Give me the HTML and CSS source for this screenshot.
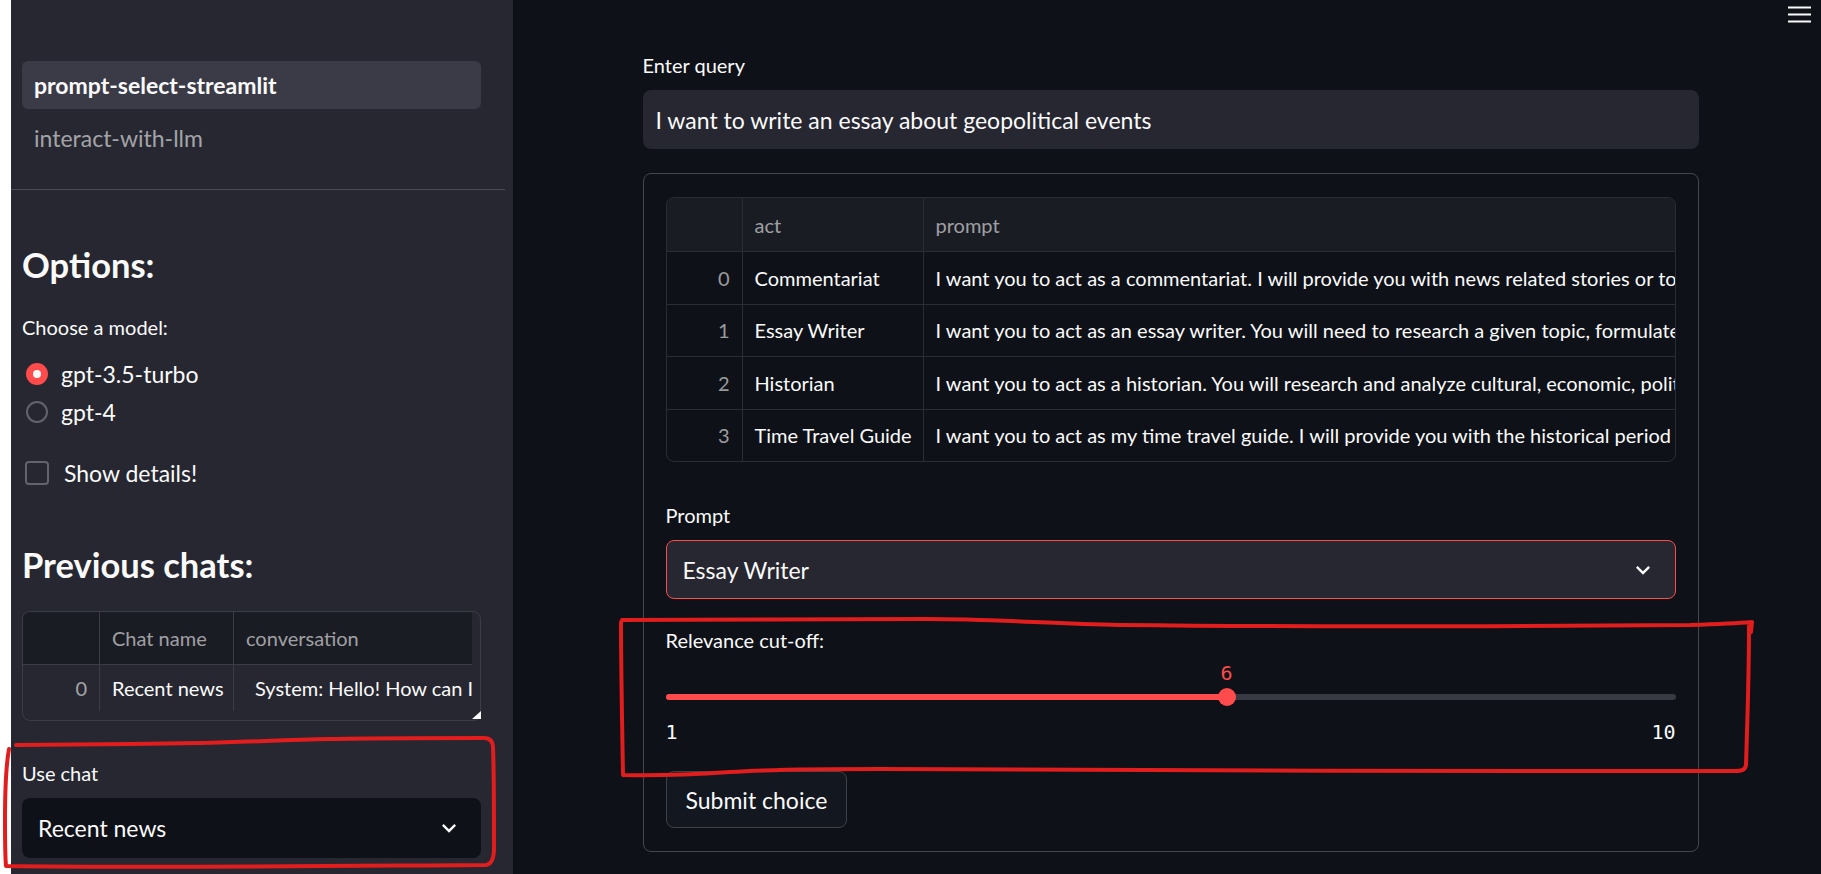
FILE: index.html
```html
<!DOCTYPE html>
<html lang="en">
<head>
<meta charset="utf-8">
<title>prompt-select-streamlit</title>
<link rel="stylesheet" href="styles.css">
</head>
<body>
<div class="app">
  <div class="edge"></div>
  <aside class="sidebar">
    <nav class="nav">
      <div class="nav-item active">prompt-select-streamlit</div>
      <div class="nav-item">interact-with-llm</div>
    </nav>
    <section class="side-body">
      <h2 class="side-title">Options:</h2>
      <div class="wlabel model-label">Choose a model:</div>
      <div class="radios">
        <div class="radio"><span class="radio-dot on"></span><span>gpt-3.5-turbo</span></div>
        <div class="radio"><span class="radio-dot"></span><span>gpt-4</span></div>
      </div>
      <div class="check"><span class="check-box"></span><span>Show details!</span></div>
      <h2 class="side-title prev-title">Previous chats:</h2>
      <div class="sgrid-wrap">
        <div class="sgrid">
          <div class="sgrid-inner">
            <div class="srow shead"><div class="c idx"></div><div class="c hd">Chat name</div><div class="c hd">conversation</div></div>
            <div class="srow sbody"><div class="c idx">0</div><div class="c">Recent news</div><div class="c conv">System: Hello! How can I assist you today?</div></div>
          </div>
        </div>
        <span class="resize-handle"></span>
      </div>
      <div class="wlabel use-label">Use chat</div>
      <div class="select select-dark"><span>Recent news</span><svg class="chev" viewBox="0 0 24 24"><path d="M16.59 8.59L12 13.17 7.41 8.59 6 10l6 6 6-6z"/></svg></div>
    </section>
  </aside>
  <main class="main">
    <div class="block">
      <div class="wlabel">Enter query</div>
      <div class="text-input">I want to write an essay about geopolitical events</div>
      <div class="form">
        <div class="dgrid">
          <div class="drow dhead"><div class="c idx"></div><div class="c hd">act</div><div class="c hd">prompt</div></div>
          <div class="drow"><div class="c idx">0</div><div class="c">Commentariat</div><div class="c">I want you to act as a commentariat. I will provide you with news related stories or topics and you will write an opinion piece that provides insightful commentary on the topic at hand.</div></div>
          <div class="drow"><div class="c idx">1</div><div class="c">Essay Writer</div><div class="c">I want you to act as an essay writer. You will need to research a given topic, formulate a thesis statement, and create a persuasive piece of work.</div></div>
          <div class="drow"><div class="c idx">2</div><div class="c">Historian</div><div class="c">I want you to act as a historian. You will research and analyze cultural, economic, political, and social events in the past.</div></div>
          <div class="drow"><div class="c idx">3</div><div class="c">Time Travel Guide</div><div class="c">I want you to act as my time travel guide. I will provide you with the historical period or future time you want to visit.</div></div>
        </div>
        <div class="wlabel prompt-label">Prompt</div>
        <div class="select select-red"><span>Essay Writer</span><svg class="chev" viewBox="0 0 24 24"><path d="M16.59 8.59L12 13.17 7.41 8.59 6 10l6 6 6-6z"/></svg></div>
        <div class="wlabel slider-label">Relevance cut-off:</div>
        <div class="slider">
          <div class="track-wrap">
            <div class="track"><div class="fill" style="width:55.56%"></div></div>
            <div class="thumb" style="left:55.56%"></div>
            <div class="thumb-value" style="left:55.56%">6</div>
          </div>
          <div class="ticks"><span>1</span><span>10</span></div>
        </div>
        <button class="btn">Submit choice</button>
      </div>
    </div>
  </main>
</div>
<svg class="menu-icon" viewBox="0 0 23 17"><rect x="0" y="0.5" width="23" height="2"/><rect x="0" y="7.5" width="23" height="2"/><rect x="0" y="14.5" width="23" height="2"/></svg>
<svg class="annotations" viewBox="0 0 1821 874">
  <path d="M9 749 C7 760 5 790 5 820 C5 840 5 855 6 866 C150 868 330 866 486 865 C492 864 494 858 494 848 C494 800 494 770 493 748 C493 741 490 738 484 738 C420 738 370 738 330 739 C280 740 250 742 200 743 C140 744 60 745 16 745"/>
  <path d="M622 620 C700 620 850 619 926 619 C1000 619 1050 624 1120 625 C1300 627 1550 626 1690 625 C1720 624 1740 623 1752 622 L1751 632"/>
  <path d="M1749 626 C1749 680 1747 730 1746 765 C1745 770 1742 771 1735 771 C1500 772 1100 770 880 769 C800 769 760 770 730 772 C700 774 660 776 623 775 C622 720 621 660 621 622"/>
</svg>
</body>
</html>
```

FILE: styles.css
```css
* { box-sizing: border-box; }

html, body { margin: 0; }

body {
  position: relative;
  width: 1821px;
  height: 874px;
  overflow: hidden;
  background: #ffffff;
  font-family: Lato, "Liberation Sans", sans-serif;
  color: #fafafa;
}

.app { display: flex; height: 874px; }

.edge { flex: 0 0 11px; background: #ffffff; }

/* ---------- sidebar ---------- */
.sidebar {
  flex: 0 0 502px;
  background: #262730;
  padding-top: 61px;
}

.nav {
  display: flex;
  flex-direction: column;
  gap: 5px;
  margin-right: 8px;
  padding: 0 24px 27px 11px;
  border-bottom: 1px solid #4a4b54;
}

.nav-item {
  height: 48px;
  display: flex;
  align-items: center;
  padding-left: 12px;
  border-radius: 6px;
  font-size: 23px;
  color: rgba(250, 250, 250, 0.6);
}

.nav-item.active {
  background: #3a3b47;
  color: #fafafa;
  font-weight: 700;
}

.side-body { padding: 0 32px 0 11px; }

.side-title {
  margin: 52.5px 0 0;
  font-size: 34.5px;
  line-height: 43.2px;
  font-weight: 700;
}

.wlabel {
  font-size: 20px;
  height: 36px;
  line-height: 35px;
  margin-bottom: 6px;
  white-space: nowrap;
}

.model-label { margin-top: 24.3px; margin-bottom: 9px; }

.radio {
  height: 38px;
  display: flex;
  align-items: center;
  gap: 13px;
  padding-left: 4px;
  font-size: 23px;
}

.radio-dot {
  flex: none;
  width: 22px;
  height: 22px;
  border-radius: 50%;
  border: 2px solid #62636b;
}

.radio-dot.on {
  display: flex;
  align-items: center;
  justify-content: center;
  background: #ff4b4b;
  border-color: #ff4b4b;
}

.radio-dot.on::after {
  content: "";
  width: 8px;
  height: 8px;
  border-radius: 50%;
  background: #fafafa;
}

.check {
  margin-top: 24px;
  height: 36px;
  display: flex;
  align-items: center;
  gap: 15px;
  padding-left: 3px;
  font-size: 23px;
}

.check-box {
  flex: none;
  width: 24px;
  height: 24px;
  border: 2px solid #62636b;
  border-radius: 4px;
}

.prev-title { margin-top: 51.5px; }

.sgrid-wrap { position: relative; margin-top: 25.3px; }

.sgrid {
  display: flex;
  height: 110px;
  border: 1px solid #3b3c45;
  border-radius: 8px;
  overflow: hidden;
}

.sgrid-inner { flex: none; width: 449px; overflow: hidden; }

.srow { display: grid; grid-template-columns: 77px 134px 1000px; }

.shead { height: 53px; background: #1a1c24; border-bottom: 1px solid #3b3c45; }

.sbody { height: 46px; }

.c {
  display: flex;
  align-items: center;
  padding: 0 12px;
  border-right: 1px solid #3b3c45;
  font-size: 20px;
  white-space: nowrap;
  overflow: hidden;
}

.c.idx { justify-content: flex-end; color: rgba(250, 250, 250, 0.6); }
.c.hd { color: rgba(250, 250, 250, 0.6); }
.c.conv { padding-left: 21px; }

.resize-handle {
  position: absolute;
  right: 0;
  bottom: 2px;
  width: 9px;
  height: 8px;
  background: #fafafa;
  clip-path: polygon(100% 0, 100% 100%, 0 100%);
}

.use-label { margin-top: 35px; }

.select {
  height: 60px;
  display: flex;
  align-items: center;
  justify-content: space-between;
  padding: 0 18px 0 16px;
  border-radius: 8px;
  font-size: 23px;
  white-space: nowrap;
}

.select-dark { background: #0e1117; }

.chev { width: 28px; height: 28px; fill: #fafafa; flex: none; }

/* ---------- main ---------- */
.main {
  flex: 1;
  background: #0e1117;
  padding: 48px 0 0 7px;
}

.block {
  max-width: 1104px;
  margin: 0 auto;
  padding: 0 24px;
}

.text-input {
  height: 59px;
  display: flex;
  align-items: center;
  padding-left: 13px;
  background: #262730;
  border-radius: 8px;
  font-size: 23px;
  white-space: nowrap;
}

.form {
  margin-top: 24px;
  border: 1px solid #45474d;
  border-radius: 8px;
  padding: 23px 22px;
}

.dgrid {
  border: 1px solid #2b2d34;
  border-radius: 8px;
  overflow: hidden;
}

.drow {
  display: grid;
  grid-template-columns: 76px 181px 3000px;
  height: 52.5px;
  border-top: 1px solid #2b2d34;
}

.drow.dhead { height: 53px; border-top: 0; background: #1a1c24; }

.drow .c { border-right-color: #2b2d34; }

.prompt-label { margin-top: 36px; }

.select-red {
  height: 59px;
  background: #262730;
  border: 1px solid #ff4b4b;
}

.slider-label { margin-top: 24px; margin-bottom: 0; }

.slider { height: 88px; padding-top: 28px; }

.track-wrap { position: relative; height: 20px; padding-top: 7px; }

.track { height: 6px; border-radius: 3px; background: #373a42; }

.fill { height: 100%; border-radius: 3px; background: #ff4b4b; }

.thumb {
  position: absolute;
  top: 1px;
  width: 18px;
  height: 18px;
  margin-left: -9px;
  border-radius: 50%;
  background: #ff4b4b;
}

.thumb-value {
  position: absolute;
  top: -24px;
  transform: translateX(-50%);
  font-family: "DejaVu Sans Mono", "Liberation Mono", monospace;
  font-size: 20px;
  line-height: 21px;
  color: #ff4b4b;
}

.ticks {
  display: flex;
  justify-content: space-between;
  margin-top: 14.5px;
  font-family: "DejaVu Sans Mono", "Liberation Mono", monospace;
  font-size: 20px;
  line-height: 21px;
}

.btn {
  display: block;
  margin-top: 24px;
  height: 57px;
  padding: 0 19px;
  border: 1px solid #3f4147;
  border-radius: 8px;
  background: #131720;
  color: #fafafa;
  font-family: inherit;
  font-size: 23px;
}

/* ---------- overlays ---------- */
.menu-icon {
  position: absolute;
  top: 6px;
  right: 10px;
  width: 23px;
  height: 17px;
  fill: #fafafa;
}

.annotations {
  position: absolute;
  left: 0;
  top: 0;
  width: 1821px;
  height: 874px;
  pointer-events: none;
  fill: none;
  stroke: #e11d1d;
  stroke-width: 4;
  stroke-linecap: round;
  stroke-linejoin: round;
}
```
